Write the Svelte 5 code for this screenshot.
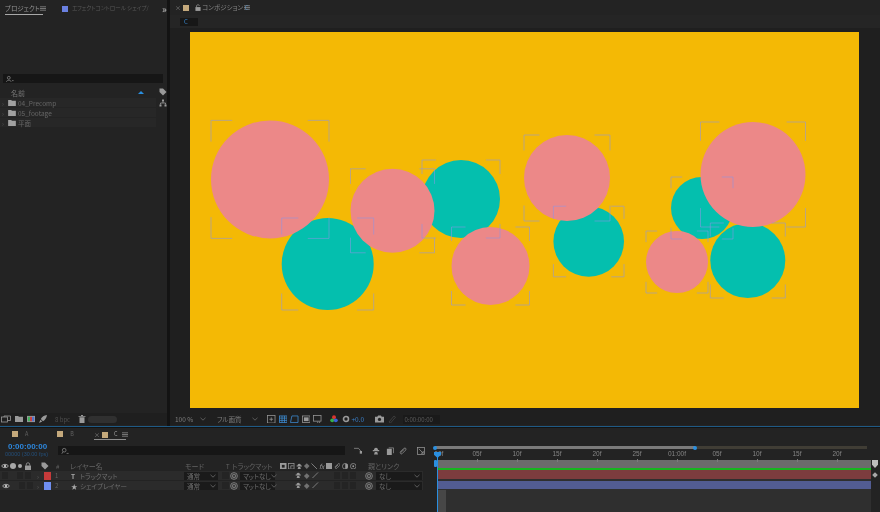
<script lang="ts">
  const PINK = '#ec8888'
  const TEAL = '#04bfae'

  // circle centres are in comp space, the yellow area is 669 x 376
  const teals = [
    { x: 137.7, y: 232, r: 46 },
    { x: 271, y: 167, r: 39 },
    { x: 398.7, y: 209.5, r: 35.3 },
    { x: 512, y: 176, r: 31 },
    { x: 557.8, y: 228.5, r: 37.5 },
  ]
  const pinks = [
    { x: 80, y: 147.4, r: 59 },
    { x: 202.5, y: 178.8, r: 42 },
    { x: 300.5, y: 234, r: 39 },
    { x: 377, y: 146, r: 43 },
    { x: 487, y: 230, r: 31 },
    { x: 563, y: 142.5, r: 52.5 },
  ]

  function corners(c: { x: number; y: number; r: number }) {
    const l = c.r * 0.36
    const a = c.x - c.r, b = c.x + c.r, t = c.y - c.r, u = c.y + c.r
    return `M${a} ${t + l}V${t}H${a + l}M${b - l} ${t}H${b}V${t + l}M${b} ${u - l}V${u}H${b - l}M${a + l} ${u}H${a}V${u - l}`
  }

  const ticks = ['00f', '05f', '10f', '15f', '20f', '25f', '01:00f', '05f', '10f', '15f', '20f']

  const folders = ['04_Precomp', '05_footage', '平面']

  const layers = [
    { n: 1, color: '#c53a3a', kind: 'T', name: 'トラックマット', eye: false },
    { n: 2, color: '#6f8ef0', kind: '★', name: 'シェイプレイヤー', eye: true },
  ]
</script>

{#snippet menu()}
  <svg class="ico menu" viewBox="0 0 7 5"><path d="M0 .5H7M0 2.500H7M0 4.500H7" /></svg>
{/snippet}

{#snippet eye()}
  <svg class="ico eye" viewBox="0 0 8 6"><path d="M.5 3C2 .8 6 .8 7.500 3 6 5.200 2 5.200 .5 3Z" /><circle cx="4" cy="3" r="1.200" /></svg>
{/snippet}

{#snippet shy()}
  <svg class="ico" viewBox="0 0 8 8"><path class="fill" d="M4 .8C2.500.8 2 2 2 3H.8v1.200h6.400V3H6C6 2 5.500.8 4 .8ZM2.800 5h2.400L6 7.400H2Z" /></svg>
{/snippet}

{#snippet spiral()}
  <svg class="ico" viewBox="0 0 9 9"><circle cx="4.500" cy="4.500" r="3.800" /><circle cx="4.500" cy="4.500" r="2" /><circle class="fill" cx="4.500" cy="4.500" r=".6" /></svg>
{/snippet}

{#snippet chevron()}
  <svg class="chev" viewBox="0 0 6 4"><path d="M.5.8 3 3.200 5.500.8" /></svg>
{/snippet}

<div class="app">
  <div class="top">
    <section class="project">
      <div class="tabs">
        <span class="tab current">プロジェクト{@render menu()}</span>
        <span class="square blue"></span>
        <span class="tab dim">エフェクトコントロール シェイプ/</span>
        <span class="more">»</span>
      </div>

      <div class="thumb"></div>

      <div class="search project-search">
        <svg class="ico" viewBox="0 0 10 8"><circle cx="3.500" cy="2.500" r="1.800" /><path d="M.5 7.500C1 5 6 5 6.500 7.500M7.500 6h2" /></svg>
      </div>

      <div class="names">
        <div class="list">
          <div class="name-head"><span>名前</span><i class="sort"></i></div>
          {#each folders as f}
            <div class="folder">
              <span class="arrow">›</span>
              <svg class="folder-ico" viewBox="0 0 9 7"><path d="M0 0H3.500L4.500 1H9V7H0Z" /></svg>
              <span>{f}</span>
            </div>
          {/each}
        </div>
        <div class="list-side">
          <svg class="ico" viewBox="0 0 8 8"><path class="fill" d="M.5.5H4L7.500 4 4 7.500.5 4Z" /></svg>
          <svg class="ico" viewBox="0 0 8 8"><path class="fill" d="M3 .5H5V2.500H3ZM.5 5.500H2.500V7.500H.5ZM5.500 5.500H7.500V7.500H5.500Z" /><path d="M4 2.500V4M1.500 5.500V4H6.500V5.500" /></svg>
        </div>
      </div>

      <div class="spacer"></div>

      <div class="foot project-foot">
        <svg class="ico wide" viewBox="0 0 10 7"><rect x=".5" y="1.500" width="6" height="5" /><path d="M3 1.500V.5H9.500V5H6.500" /></svg>
        <svg class="ico" viewBox="0 0 9 7"><path class="fill" d="M0 0H3.500L4.500 1H9V7H0Z" /></svg>
        <svg class="ico" viewBox="0 0 9 7"><rect class="fill" width="9" height="7" /><rect x="1" y="1" width="2.300" height="5" fill="#3fae5a" stroke="none" /><rect x="3.400" y="1" width="2.300" height="5" fill="#c9433f" stroke="none" /><rect x="5.800" y="1" width="2.300" height="5" fill="#4a6fd0" stroke="none" /></svg>
        <svg class="ico" viewBox="0 0 8 8"><path class="fill" d="M8 0C5 .3 3 2 1.800 4L4 6.200C6 5 7.700 3 8 0ZM1.500 4.800 0 8l3.200-1.500Z" /></svg>
        <span class="bpc">8 bpc</span>
        <svg class="ico" viewBox="0 0 7 8"><path class="fill" d="M0 1H7V1.800H0ZM2.500 0H4.500V1H2.500ZM1 2.300H6V8H1Z" /></svg>
        <span class="pill"></span>
      </div>
    </section>

    <section class="comp">
      <div class="tabs comp-tabs">
        <span class="close">×</span>
        <span class="square tan"></span>
        <svg class="ico lock" viewBox="0 0 7 8"><path d="M1.800 3.500V2C1.800.4 5.200.4 5.200 2" /><rect class="fill" x=".5" y="3.500" width="6" height="4.500" /></svg>
        <span class="tab comp-name">コンポジション <b>C</b></span>
        {@render menu()}
      </div>
      <div class="breadcrumb"><span class="crumb">C</span></div>

      <div class="viewer">
        <svg class="canvas" viewBox="0 0 669 376">
          {#each teals as c}
            <circle cx={c.x} cy={c.y} r={c.r} fill={TEAL} />
          {/each}
          {#each pinks as c}
            <circle cx={c.x} cy={c.y} r={c.r} fill={PINK} />
          {/each}
          {#each [...teals, ...pinks] as c}
            <path class="handles" d={corners(c)} />
          {/each}
        </svg>
      </div>

      <div class="foot comp-foot">
        <span class="zoom">100 %</span>
        {@render chevron()}
        <span class="quality">フル画質</span>
        {@render chevron()}
        <div class="view-icons">
          <svg class="ico" viewBox="0 0 9 9"><rect x=".5" y=".5" width="8" height="8" /><path d="M4.500 2.500v4M2.500 4.500h4" /></svg>
          <svg class="ico on" viewBox="0 0 9 9"><rect x=".5" y="1" width="8" height="7" /><path d="M.5 3.300h8M.5 5.700h8M3.200 1v7M5.800 1v7" /></svg>
          <svg class="ico on" viewBox="0 0 9 9"><path d="M2 1H8.500V8H.5Z" /></svg>
          <svg class="ico" viewBox="0 0 9 9"><rect x=".5" y="1" width="8" height="7" /><rect class="fill" x="2" y="2.500" width="5" height="4" /></svg>
          <svg class="ico" viewBox="0 0 9 9"><rect x=".5" y=".5" width="8" height="6" /><path d="M5 7v2M7 7v2" /></svg>
        </div>
        <svg class="ico wheel" viewBox="0 0 9 9"><circle cx="4.500" cy="2.500" r="2.200" fill="#d8352f" /><circle cx="2.500" cy="6" r="2.200" fill="#35b04a" /><circle cx="6.500" cy="6" r="2.200" fill="#3a62d8" /></svg>
        <svg class="ico gear" viewBox="0 0 9 9"><circle cx="4.500" cy="4.500" r="2.800" stroke-width="1.800" /></svg>
        <span class="exposure">+0.0</span>
        <svg class="ico camera" viewBox="0 0 10 8"><path class="fill" d="M0 1.500H2.500L3.500 0H6.500L7.500 1.500H10V8H0Z" /><circle cx="5" cy="4.500" r="1.800" fill="#232323" stroke="none" /></svg>
        <svg class="ico ghost" viewBox="0 0 8 8"><path d="M1 7 6 1l1.500 1.200L2.500 8Z" /></svg>
        <span class="timecode-box">0:00:00:00</span>
      </div>
    </section>
  </div>

  <section class="timeline">
    <div class="tl-left">
      <div class="tabs tl-tabs">
        <span class="square tan"></span><span class="seq">A</span>
        <span class="square tan second"></span><span class="seq">B</span>
        <span class="seq-current">
          <span class="close">×</span>
          <span class="square tan"></span>
          <span class="seq on">C</span>
          {@render menu()}
        </span>
      </div>

      <div class="tools">
        <div class="time">
          <div class="time-main">0:00:00:00</div>
          <div class="time-sub">00000 (30.00 fps)</div>
        </div>
        <div class="search tl-search">
          <svg class="ico" viewBox="0 0 10 8"><circle cx="4" cy="3" r="2.300" /><path d="M2.500 5 1 7.500M7 7h2.500" /></svg>
        </div>
        <div class="tool-icons">
          <svg class="ico" viewBox="0 0 9 9"><path d="M0 1.500H5M5 1.500 8 5" /><rect class="fill" x="6.500" y="4.500" width="2.500" height="3" /></svg>
          {@render shy()}
          <svg class="ico" viewBox="0 0 9 9"><rect class="fill" x="1" y="2" width="5.500" height="7" /><path d="M3 1H8.500V7" /></svg>
          <svg class="ico" viewBox="0 0 9 9"><path d="M1 6 5.500 1.500C7.500.5 8.500 2 7.500 3.500L3.500 7.500C2 8.500 1 7 2.500 5.500L6 2.500" /></svg>
          <svg class="ico" viewBox="0 0 9 9"><rect x=".5" y=".5" width="8" height="8" /><path d="M2 2 7 7M7 4.500V7H4.500" /></svg>
        </div>
      </div>

      <div class="layer-row head">
        <span class="av">
          {@render eye()}
          <i class="dot big"></i>
          <i class="dot"></i>
          <svg class="ico" viewBox="0 0 7 8"><path d="M1.800 3.500V2C1.800.4 5.200.4 5.200 2V3.500" /><rect class="fill" x=".5" y="3.500" width="6" height="4.500" /></svg>
        </span>
        <span class="lbl"><svg class="ico" viewBox="0 0 8 8"><path class="fill" d="M.5.5H4L7.500 4 4 7.500.5 4Z" /></svg></span>
        <span class="num">#</span>
        <span class="name">レイヤー名</span>
        <span class="mode">モード</span>
        <span class="t">T</span>
        <span class="matte">トラックマット</span>
        <span class="switches head-switches">
          <svg class="ico" viewBox="0 0 7 7"><rect class="fill" width="7" height="7" /><rect x="2" y="2" width="3" height="3" fill="#232323" stroke="none" /></svg>
          <svg class="ico" viewBox="0 0 7 7"><rect x=".5" y=".5" width="6" height="6" /><path d="M3 3h3M3 3v3" /></svg>
          {@render shy()}
          <i class="diamond"></i>
          <svg class="ico" viewBox="0 0 7 7"><path d="M.5.5 6.500 6.500" /></svg>
          <em>fx</em>
          <svg class="ico" viewBox="0 0 7 7"><rect class="fill" width="7" height="7" /></svg>
          <svg class="ico" viewBox="0 0 8 8"><path d="M1 5 5 1C7 0 8 2 7 3L3.500 6.500C2 7.500 1 6 2 5L5 2.500" /></svg>
          <svg class="ico" viewBox="0 0 7 7"><circle cx="3.500" cy="3.500" r="3" /><path class="fill" d="M3.500.5a3 3 0 0 1 0 6Z" /></svg>
          <svg class="ico" viewBox="0 0 7 7"><circle cx="3.500" cy="3.500" r="3" /><circle class="fill" cx="3.500" cy="3.500" r="1" /></svg>
        </span>
        <span class="parent-label">親とリンク</span>
      </div>

      {#each layers as l}
        <div class="layer-row">
          <span class="av">
            {#if l.eye}{@render eye()}{:else}<i class="box"></i>{/if}
            <i class="box first"></i>
            <i class="box"></i>
          </span>
          <span class="row-arrow">›</span>
          <span class="swatch" style="background: {l.color}"></span>
          <span class="num">{l.n}</span>
          <span class="name"><b class="kind">{l.kind}</b>{l.name}</span>
          <span class="drop mode-drop">通常{@render chevron()}</span>
          <i class="box t-box"></i>
          {@render spiral()}
          <span class="drop matte-drop">マットなし{@render chevron()}</span>
          <span class="switches">
            {@render shy()}
            <i class="diamond"></i>
            <svg class="ico" viewBox="0 0 7 7"><path d="M.5 6.500 6.500 .5" /></svg>
          </span>
          <span class="boxes"><i class="box"></i><i class="box"></i><i class="box"></i></span>
          {@render spiral()}
          <span class="drop parent-drop">なし{@render chevron()}</span>
        </div>
      {/each}
    </div>

    <div class="tl-right">
      <div class="range">
        <div class="range-on"></div>
        <i class="knob a"></i>
        <i class="knob b"></i>
      </div>
      <div class="ruler">
        {#each ticks as t}
          <div class="tick"><span>{t}</span></div>
        {/each}
      </div>
      <div class="tracks">
        <div class="work"></div>
        <div class="green"></div>
        <div class="bar red"></div>
        <div class="bar indigo"></div>
        <div class="under"><div class="under-strip"></div></div>
      </div>
      <i class="playhead-line"></i>
      <i class="playhead"></i>
      <i class="in-marker"></i>
      <i class="comp-marker"></i>
      <i class="end-diamond"></i>
    </div>
  </section>
</div>

<style>
  :global(body) {
    margin: 0;
    background: #131313;
  }
  .app {
    width: 880px;
    height: 512px;
    overflow: hidden;
    display: flex;
    flex-direction: column;
    font-family: "Noto Sans CJK JP", "Noto Sans", sans-serif;
    font-feature-settings: "palt";
    font-size: 7px;
    color: #7c7c7c;
    background: #131313;
    filter: blur(.35px);
  }
  .top {
    height: 426px;
    display: flex;
    gap: 3px;
    border-bottom: 1px solid #1f5a85;
  }
  section { background: #232323; }
  .ico {
    width: 8px;
    height: 8px;
    flex: none;
    fill: none;
    stroke: #9a9a9a;
    stroke-width: .8;
  }
  .ico .fill, .ico.fill { fill: #9a9a9a; stroke: none; }
  .ico.on { stroke: #3f8fd8; }
  .menu { width: 6px; height: 5px; }
  .eye { stroke: #c0c0c0; }
  .eye circle { fill: #c0c0c0; stroke: none; }
  .chev {
    width: 6px;
    height: 4px;
    flex: none;
    fill: none;
    stroke: #6c6c6c;
    stroke-width: .8;
  }

  .tabs {
    height: 17px;
    display: flex;
    align-items: center;
  }
  .square {
    width: 6px;
    height: 6px;
    flex: none;
  }
  .square.blue { background: #6a80e0; margin-left: 19px; }
  .square.tan { background: #c4a97c; }

  .project {
    width: 167px;
    display: flex;
    flex-direction: column;
  }
  .project .tabs { padding-left: 5px; }
  .tab { white-space: nowrap; line-height: 1; }
  .tab.current {
    width: 38px;
    display: flex;
    align-items: center;
    justify-content: space-between;
    box-sizing: border-box;
    color: #959595;
    padding-bottom: 2px;
    border-bottom: 1px solid #a8a8a8;
    margin-top: 3px;
    font-size: 6.500px;
  }
  .tab.dim {
    color: #565656;
    margin-left: 4px;
    width: 85px;
    font-size: 5.500px;
  }
  .more {
    color: #c0c0c0;
    font-size: 10px;
    line-height: 1;
    margin-left: 5px;
  }
  .thumb { height: 57px; }
  .search {
    background: #161616;
    display: flex;
    align-items: center;
  }
  .project-search {
    height: 9px;
    margin: 0 4px 0 3px;
    padding-left: 3px;
  }
  .names { display: flex; margin-top: 4px; }
  .list { width: 157px; }
  .name-head {
    height: 11px;
    padding: 0 12px 0 11px;
    display: flex;
    align-items: center;
    justify-content: space-between;
    color: #787878;
  }
  .sort {
    border-left: 3px solid transparent;
    border-right: 3px solid transparent;
    border-bottom: 3px solid #2a8fe0;
  }
  .folder {
    height: 10px;
    display: flex;
    align-items: center;
    background: #272727;
    font-size: 6.500px;
    color: #666;
    border-bottom: 1px solid #232323;
    box-sizing: border-box;
  }
  .arrow {
    width: 8px;
    padding-right: 2px;
    box-sizing: border-box;
    text-align: center;
    color: #555;
  }
  .folder-ico {
    width: 8px;
    height: 6px;
    margin-right: 2px;
    fill: #a0a0a0;
  }
  .list-side {
    flex: 1;
    display: flex;
    flex-direction: column;
    align-items: center;
    gap: 3px;
    padding: 1px 0 0 3px;
  }
  .spacer { flex: 1; }

  .foot {
    height: 12px;
    background: #1f1f1f;
    display: flex;
    align-items: center;
    flex: none;
    margin-bottom: 1px;
  }
  .project-foot { padding-left: 1px; gap: 4px; }
  .project-foot .ico:first-child { width: 10px; }
  .bpc { color: #4e4e4e; margin-left: 4px; font-size: 6px; width: 19px; }
  .pill {
    width: 29px;
    height: 7px;
    margin-left: -2px;
    border-radius: 4px;
    background: #303030;
  }

  .comp {
    flex: 1;
    display: flex;
    flex-direction: column;
    min-width: 0;
  }
  .comp-tabs { height: 15px; padding-left: 5px; }
  .close { color: #808080; font-size: 6px; margin-right: 4px; width: 4px; flex: none; }
  .lock { width: 6px; height: 7px; margin: 0 1px 0 6px; }
  .comp-name { color: #858585; font-size: 6.500px; width: 42px; flex: none; }
  .comp-name b { color: #3a8ed8; font-weight: 400; }
  .breadcrumb {
    height: 13px;
    padding-left: 10px;
    display: flex;
    align-items: center;
    background: #252525;
    box-sizing: border-box;
  }
  .crumb {
    width: 18px;
    height: 8px;
    line-height: 8px;
    padding-left: 4px;
    box-sizing: border-box;
    background: #171717;
    color: #3a8ed8;
    font-size: 6px;
  }
  .viewer {
    flex: 1;
    padding: 4px 0 0 20px;
    background: #1f1f1f;
    min-height: 0;
  }
  .canvas {
    display: block;
    width: 669px;
    height: 376px;
    background: #f4b905;
  }
  .handles {
    fill: none;
    stroke: rgba(140, 150, 230, .55);
    stroke-width: 1;
  }
  .comp-foot {
    padding-left: 5px;
    color: #7e7e7e;
    font-size: 6.500px;
  }
  .zoom { width: 25px; flex: none; }
  .quality { width: 35px; flex: none; margin-left: 11px; }
  .view-icons {
    display: flex;
    gap: 3px;
    margin-left: 9px;
  }
  .view-icons .ico { width: 8.500px; height: 8.500px; }
  .wheel { margin-left: 8px; stroke: none; }
  .gear { margin-left: 4px; }
  .exposure { color: #3a7fc8; margin-left: 2px; width: 16px; flex: none; }
  .camera { width: 9px; margin-left: 7.500px; }
  .ghost { stroke: #444; margin-left: 3.500px; }
  .timecode-box {
    margin-left: 7px;
    width: 37px;
    padding-left: 2px;
    color: #5e5e5e;
    font-size: 6px;
    background: #1a1a1a;
    box-sizing: border-box;
    flex: none;
  }

  .timeline {
    flex: 1;
    display: flex;
    min-height: 0;
    margin-top: 1px;
  }
  .tl-left { width: 434px; flex: none; }
  .tl-tabs {
    height: 14px;
    padding-left: 12px;
    align-items: flex-start;
    padding-top: 3px;
    box-sizing: border-box;
  }
  .seq {
    font-size: 5.500px;
    color: #606060;
    margin-left: 7px;
    line-height: 7px;
  }
  .seq.on { color: #a0a0a0; margin: 0 4px 0 6px; }
  .second { margin-left: 29px; }
  .seq-current {
    display: flex;
    align-items: center;
    height: 7px;
    margin-left: 20px;
    padding-bottom: 1px;
    border-bottom: 1px solid #8e8e8e;
    width: 32px;
  }

  .tools {
    height: 19px;
    display: flex;
    align-items: flex-start;
  }
  .time {
    width: 58px;
    padding-left: 5px;
    box-sizing: border-box;
    white-space: nowrap;
    font-family: "Liberation Sans", sans-serif;
  }
  .time-main {
    color: #2c86dc;
    font-weight: 700;
    font-size: 8px;
    line-height: 9px;
    margin-left: 3px;
  }
  .time-sub {
    color: #24507c;
    font-size: 5.500px;
    line-height: 7px;
  }
  .tl-search {
    width: 287px;
    height: 9px;
    margin-top: 4px;
    padding-left: 3px;
    box-sizing: border-box;
  }
  .tool-icons {
    display: flex;
    margin: 5px 0 0 9px;
    align-items: center;
  }
  .tool-icons :global(.ico) { margin-right: 6px; }
  .tool-icons .ico:first-child { margin-right: 10px; }
  .tool-icons .ico:nth-child(4) { margin-right: 10px; }
  .tool-icons .ico:nth-child(3) { margin-right: 5px; }

  .layer-row {
    width: 423px;
    height: 10px;
    display: flex;
    align-items: center;
    background: #2b2b2b;
    white-space: nowrap;
    font-size: 6.500px;
    color: #6e6e6e;
    box-sizing: border-box;
    border-bottom: 1px solid #232323;
  }
  .layer-row.head {
    background: none;
    border: 0;
    color: #636363;
    font-size: 7px;
  }
  .av {
    width: 34px;
    flex: none;
    padding-left: 2px;
    box-sizing: border-box;
    display: flex;
    align-items: center;
    gap: 2px;
  }
  .head .av { padding-left: 1px; gap: 0; }
  .head .av .dot { margin: 0 2px; }
  .head .av .dot.big { width: 6px; height: 6px; margin: 0 0 0 1px; }
  .dot {
    width: 4px;
    height: 4px;
    border-radius: 50%;
    background: #a8a8a8;
    flex: none;
  }
  .lbl {
    width: 19px;
    padding-left: 7px;
    box-sizing: border-box;
    flex: none;
    display: flex;
  }
  .box {
    width: 6px;
    height: 7px;
    flex: none;
    background: #242424;
    display: block;
  }
  .box.first { margin-left: 7px; }
  .row-arrow {
    width: 8px;
    text-align: center;
    flex: none;
    color: #606060;
  }
  .swatch {
    width: 7px;
    height: 8px;
    margin: 0 3px 0 2px;
    flex: none;
  }
  .num { width: 16px; padding-left: 1px; box-sizing: border-box; flex: none; color: #606060; font-size: 6px; }
  .head .num { width: 17px; padding-left: 3px; }
  .name {
    width: 114px;
    flex: none;
    display: flex;
    align-items: center;
  }
  .kind {
    color: #a8a8a8;
    width: 10px;
    padding-left: 1px;
    box-sizing: border-box;
    flex: none;
    font-size: 6.500px;
  }
  .mode { width: 42px; flex: none; padding-left: 1px; box-sizing: border-box; }
  .t { width: 6px; flex: none; font-size: 6px; }
  .matte { width: 48px; flex: none; }
  .drop {
    background: #1a1a1a;
    height: 8px;
    display: flex;
    align-items: center;
    justify-content: space-between;
    padding: 0 2px 0 3px;
    box-sizing: border-box;
    flex: none;
  }
  .mode-drop { width: 34px; margin-right: 4px; }
  .t-box { width: 7px; margin-right: 1px; }
  .matte-drop { width: 35px; margin-left: 2px; }
  .switches {
    flex: none;
    display: flex;
    align-items: center;
    margin-left: 20px;
    gap: 2.500px;
    width: 39px;
  }
  .head-switches {
    margin-left: 0;
    width: 83px;
    gap: 1.500px;
  }
  .head-switches .ico { width: 7px; height: 7px; }
  .head-switches em { font-size: 6.500px; color: #9a9a9a; font-style: italic; }
  .switches .ico { width: 6.500px; height: 6.500px; }
  .diamond {
    width: 3.500px;
    height: 3.500px;
    transform: rotate(45deg);
    background: #727272;
    flex: none;
    margin: 0 1px;
  }
  .boxes {
    display: flex;
    gap: 2px;
    width: 31px;
    flex: none;
  }
  .parent-label { margin-left: 5px; }
  .parent-drop { width: 46px; margin-left: 3px; }

  .tl-right {
    flex: 1;
    position: relative;
    min-width: 0;
    padding-top: 18px;
    display: flex;
    flex-direction: column;
  }
  .range {
    position: relative;
    height: 3px;
    margin: 0 13px 0 1px;
    background: #403d35;
  }
  .range-on {
    width: 260px;
    height: 3px;
    background: #7a7a7a;
  }
  .knob {
    position: absolute;
    top: -.5px;
    width: 4px;
    height: 4px;
    border-radius: 50%;
    background: #2a8fe0;
  }
  .knob.a { left: -2px; }
  .knob.b { left: 258px; }
  .ruler {
    height: 11px;
    display: flex;
    padding-left: 3px;
    position: relative;
    z-index: 1;
  }
  .tick {
    width: 40px;
    flex: none;
    position: relative;
    font-family: "Liberation Sans", sans-serif;
    font-size: 6.500px;
    color: #858585;
    line-height: 9px;
  }
  .tick span {
    display: block;
    width: fit-content;
    transform: translateX(-50%);
  }
  .tick:first-child span { transform: translateX(-30%); }
  .tick::after {
    content: '';
    position: absolute;
    left: 0;
    top: 10px;
    width: 1px;
    height: 3px;
    background: #7c7c7c;
  }
  .tracks {
    flex: 1;
    margin: 0 9px 0 3px;
    display: flex;
    flex-direction: column;
    background: #2f2f2f;
  }
  .work { height: 8px; background: #6b6b6b; flex: none; }
  .green { height: 2px; background: #17b51f; flex: none; }
  .bar { height: 9px; flex: none; }
  .bar.red { background: #7c3c3e; }
  .bar.indigo { background: #525c92; height: 8px; margin-top: 2px; }
  .under { flex: 1; margin-top: 1px; }
  .under-strip { width: 9px; height: 100%; background: #474747; }

  .playhead-line {
    position: absolute;
    left: 3px;
    top: 24px;
    bottom: 0;
    width: 1px;
    background: #2a8fe0;
    z-index: 2;
  }
  .playhead {
    position: absolute;
    left: 0;
    top: 24px;
    width: 7px;
    height: 6px;
    background: #2a8fe0;
    clip-path: polygon(0 0, 100% 0, 100% 45%, 50% 100%, 0 45%);
    z-index: 2;
  }
  .in-marker {
    position: absolute;
    left: 0;
    top: 32px;
    width: 3px;
    height: 7px;
    background: #2a8fe0;
    border-radius: 1px;
  }
  .comp-marker {
    position: absolute;
    left: 438px;
    top: 32px;
    width: 6px;
    height: 8px;
    background: #bdbdbd;
    clip-path: polygon(0 0, 100% 0, 100% 60%, 50% 100%, 0 60%);
  }
  .end-diamond {
    position: absolute;
    left: 439px;
    top: 45px;
    width: 4px;
    height: 4px;
    background: #a8a8a8;
    transform: rotate(45deg);
  }
</style>
